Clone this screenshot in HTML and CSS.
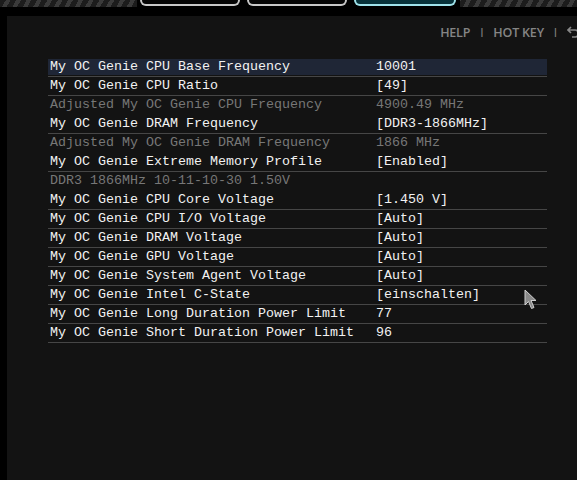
FILE: index.html
```html
<!DOCTYPE html>
<html>
<head>
<meta charset="utf-8">
<link rel="stylesheet" href="styles.css">
</head>
<body>
<div class="topbar">
  <div class="stripes stripes-left"></div>
  <div class="tabs">
    <div class="tab"></div>
    <div class="tab"></div>
    <div class="tab tab-active"></div>
  </div>
  <div class="stripes stripes-right"></div>
</div>
<main class="panel">
  <nav class="toolbar">
    <span>HELP</span><span class="sep">I</span><span>HOT KEY</span><span class="sep">I</span>
    <svg class="back" width="12" height="12" viewBox="0 0 12 12"><path d="M4 1 L1 4 L4 7 M1 4 H8 Q11 4 11 7.5 Q11 11 8 11 H5" fill="none" stroke="#888" stroke-width="1.6"/></svg>
  </nav>
  <ul class="settings">
    <li class="row item selected"><span class="label">My OC Genie CPU Base Frequency</span><span class="value">10001</span></li>
    <li class="row item"><span class="label">My OC Genie CPU Ratio</span><span class="value">[49]</span></li>
    <li class="row info"><span class="label">Adjusted My OC Genie CPU Frequency</span><span class="value">4900.49 MHz</span></li>
    <li class="row item"><span class="label">My OC Genie DRAM Frequency</span><span class="value">[DDR3-1866MHz]</span></li>
    <li class="row info"><span class="label">Adjusted My OC Genie DRAM Frequency</span><span class="value">1866 MHz</span></li>
    <li class="row item"><span class="label">My OC Genie Extreme Memory Profile</span><span class="value">[Enabled]</span></li>
    <li class="row info"><span class="label">DDR3 1866MHz 10-11-10-30 1.50V</span></li>
    <li class="row item"><span class="label">My OC Genie CPU Core Voltage</span><span class="value">[1.450 V]</span></li>
    <li class="row item"><span class="label">My OC Genie CPU I/O Voltage</span><span class="value">[Auto]</span></li>
    <li class="row item"><span class="label">My OC Genie DRAM Voltage</span><span class="value">[Auto]</span></li>
    <li class="row item"><span class="label">My OC Genie GPU Voltage</span><span class="value">[Auto]</span></li>
    <li class="row item"><span class="label">My OC Genie System Agent Voltage</span><span class="value">[Auto]</span></li>
    <li class="row item"><span class="label">My OC Genie Intel C-State</span><span class="value">[einschalten]</span></li>
    <li class="row item"><span class="label">My OC Genie Long Duration Power Limit</span><span class="value">77</span></li>
    <li class="row item"><span class="label">My OC Genie Short Duration Power Limit</span><span class="value">96</span></li>
  </ul>
  <svg class="cursor" width="14" height="22" viewBox="0 0 14 22"><path d="M1 1 L1 16 L4.5 12.5 L7.5 19.5 L10 18.5 L7 11.5 L12 11.5 Z" fill="#8a8a8a" stroke="#d0d0d0" stroke-width="1"/></svg>
</main>
</body>
</html>
```
FILE: styles.css
```css
html, body {
  margin: 0;
  height: 100%;
  background: #000;
  overflow: hidden;
}

.topbar {
  display: flex;
  height: 7px;
}

.stripes {
  flex: 1;
  background: repeating-linear-gradient(-60deg, #1c1c1c 0 5px, #3a3a3a 5px 9px);
}

.stripes-left { flex: 0 0 137px; }

.tabs {
  display: flex;
  gap: 7px;
  padding: 0 4px 0 3px;
  background: #000;
}

.tab {
  width: 96px;
  height: 4px;
  border: 2px solid #c8c8c8;
  border-top: none;
  border-radius: 0 0 6px 6px;
  background: #050505;
}

.tab-active {
  width: 98px;
  background: #07323a;
  border-color: #9fe2ea;
}

.panel {
  position: relative;
  margin: 9px 0 0 7px;
  height: calc(100% - 16px);
  background: #131313;
  padding: 8px 0 0 41px;
  box-sizing: border-box;
}

.toolbar {
  display: flex;
  justify-content: flex-end;
  align-items: center;
  gap: 10px;
  height: 16px;
  margin-right: -2px;
  font-family: "Open Sans", sans-serif;
  font-weight: 600;
  font-size: 12.5px;
  color: #858585;
  letter-spacing: -0.2px;
  white-space: nowrap;
}

.toolbar .sep { font-weight: 400; font-size: 12px; }

.back { flex: 0 0 12px; }

.settings {
  list-style: none;
  margin: 18px 0 0;
  padding: 0;
  width: 499px;
  font-family: "Liberation Mono", monospace;
  font-size: 13.33px;
}

.row {
  display: flex;
  height: 18px;
  line-height: 17px;
  border-bottom: 1px solid transparent;
  padding-left: 2px;
  white-space: nowrap;
}

.row.item {
  color: #f2f2f2;
  border-bottom-color: #464646;
}

.row.info { color: #777; }

.row.selected {
  background: linear-gradient(#131313 0 1px, #1f2636 1px 17px, #131313 17px);
}

.label { width: 326px; }

.cursor {
  position: absolute;
  left: 517px;
  top: 273px;
}
```
